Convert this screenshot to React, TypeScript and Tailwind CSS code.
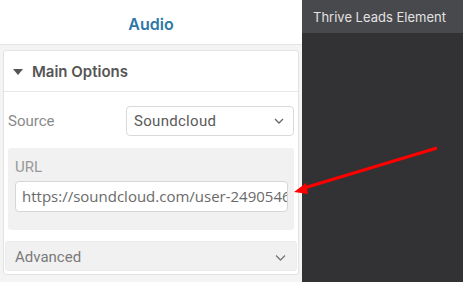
export default function App() {
  return (
    <div className="relative flex h-[282px] w-[463px] overflow-hidden bg-white" style={{ fontFamily: "Roboto, sans-serif" }}>
      {/* left settings panel */}
      <div className="flex h-full w-[302px] flex-col bg-[#f4f4f5]">
        <div className="flex h-[45px] shrink-0 items-center justify-center border-b border-[#e4e4e4] bg-white pt-[3px]">
          <span className="text-[16px] font-semibold text-[#2d78a6]" style={{ fontFamily: "Inter, sans-serif" }}>Audio</span>
        </div>
        <div className="px-[3px] pt-[5px]">
          <div className="rounded-[3px] border border-[#e3e3e3] bg-white pb-[3px]">
            <div className="flex h-[41px] items-center gap-[9px] border-b border-[#e8e8e8] pl-[9px] pt-[2px]">
              <svg width="10" height="6" viewBox="0 0 10 6"><path d="M0 0h10L5 6z" fill="#555" /></svg>
              <span className="text-[15px] font-semibold text-[#555]" style={{ fontFamily: "Inter, sans-serif" }}>Main Options</span>
            </div>
            <div className="px-[4px] pt-[14px]">
              <div className="flex items-center justify-between">
                <span className="text-[15px] text-[#8a8a8a]">Source</span>
                <div className="flex h-[30px] w-[168px] items-center justify-between rounded-[4px] border border-[#d9d9d9] bg-white pl-[7px] pr-[9px]">
                  <span className="text-[15px] text-[#5a5a5a]" style={{ letterSpacing: "0.3px" }}>Soundcloud</span>
                  <svg width="10" height="6" viewBox="0 0 10 6"><path d="M1 1l4 4 4-4" fill="none" stroke="#666" strokeWidth="1.3" /></svg>
                </div>
              </div>
              <div className="mt-[12px] rounded-[3px] bg-[#f1f1f2] pb-[18px] pl-[7px] pr-[6px] pt-[9px]">
                <div className="text-[15px] leading-[20px] text-[#999]">URL</div>
                <div className="mt-[4px] flex h-[31px] items-center overflow-hidden whitespace-nowrap rounded-[4px] border border-[#d6d6d6] bg-white pl-[6px]">
                  <span className="text-[15px] text-[#6a6a6a]" style={{ fontFamily: "'Open Sans', sans-serif" }}>https://soundcloud.com/user-249054632</span>
                </div>
              </div>
            </div>
            <div className="mx-[1px] mt-[11px] flex h-[30px] items-center justify-between rounded-[3px] border border-[#ececec] bg-[#f1f1f2] pl-[9px] pr-[10px] pt-[3px]">
              <span className="text-[15px] text-[#7a7a7a]">Advanced</span>
              <svg width="11" height="6" viewBox="0 0 11 6"><path d="M1 0.5l4.5 4.5 4.5-4.5" fill="none" stroke="#777" strokeWidth="1.3" /></svg>
            </div>
          </div>
        </div>
      </div>

      {/* right dark canvas */}
      <div className="flex flex-1 flex-col bg-[#323133]">
        <div className="flex h-[33px] items-center bg-[#48494d] pl-[11px] pt-[2px]">
          <span className="text-[13px] text-[#e2e2e2]" style={{ fontFamily: "Inter, sans-serif" }}>Thrive Leads Element</span>
        </div>
      </div>

      {/* red annotation arrow */}
      <svg className="pointer-events-none absolute left-0 top-0" width="463" height="282">
        <line x1="437" y1="148" x2="304" y2="188" stroke="#ff0000" strokeWidth="3.2" />
        <path d="M294 192L306 183L308 194Z" fill="#ff0000" />
      </svg>
    </div>
  );
}
